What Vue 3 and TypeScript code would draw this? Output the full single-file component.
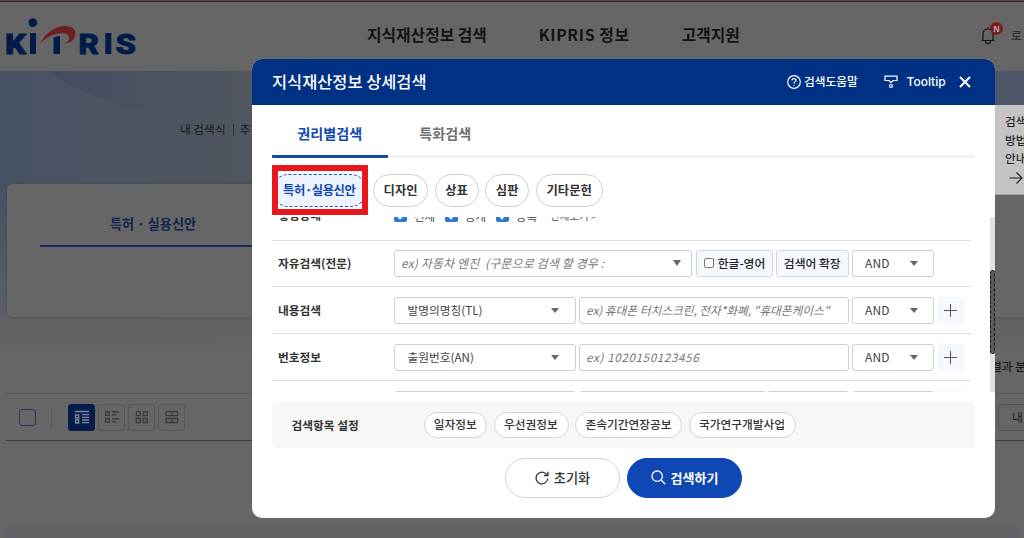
<script setup lang="ts">
interface FieldRow { label: string; option: string; placeholder: string }

const nav: string[] = ['지식재산정보 검색', 'KIPRIS 정보', '고객지원']
const chips = [
  { label: '디자인', width: 55.5 },
  { label: '상표', width: 44 },
  { label: '심판', width: 44.5 },
  { label: '기타문헌', width: 67 },
]
const rows: FieldRow[] = [
  { label: '내용검색', option: '발명의명칭(TL)', placeholder: 'ex) 휴대폰 터치스크린, 전자*화폐, "휴대폰케이스"' },
  { label: '번호정보', option: '출원번호(AN)', placeholder: 'ex) 1020150123456' },
]
const states: string[] = ['전체', '공개', '등록']
const extras = [
  { label: '일자정보', width: 63.5 },
  { label: '우선권정보', width: 75 },
  { label: '존속기간연장공보', width: 107 },
  { label: '국가연구개발사업', width: 107 },
]
</script>

<template>
  <div class="screen">
    <div class="page">
      <header class="top">
        <svg class="logo" width="132" height="40" viewBox="0 0 132 40" role="img" aria-label="KIPRIS">
          <g class="logo-letters">
            <text x="0" y="37" textLength="21" lengthAdjust="spacingAndGlyphs">K</text>
            <text x="73.500" y="37" textLength="20.500" lengthAdjust="spacingAndGlyphs">R</text>
            <text x="110.500" y="37" textLength="20.500" lengthAdjust="spacingAndGlyphs">S</text>
          </g>
          <g class="logo-blue">
            <circle cx="27.800" cy="5.600" r="4.300" />
            <rect x="25" y="16" width="6" height="21" />
            <path d="M48.500 20.500q3-1.400 6.500-1.500v18h-6.500z" />
            <rect x="100.300" y="16" width="6" height="21" />
          </g>
          <path class="logo-red" d="M35 27C40 16 50 9 60 9c7 0 12 4 10 10-1 4.500-5 7-11 7.700 3.500-1.500 5.500-3.500 5.200-6C63.500 13.500 46 14.500 35 27z" />
        </svg>
        <nav class="nav">
          <span v-for="item in nav" :key="item">{{ item }}</span>
        </nav>
        <div class="user">
          <svg width="16" height="20" viewBox="0 0 16 20" class="bell">
            <path d="M1.500 14.500h13M3 14.200V8.500c0-3.300 2-5.500 5-5.500s5 2.200 5 5.500v5.700M8 3V1.200M5.500 15c0 3.600 5 3.600 5 0" />
          </svg>
          <span class="badge">N</span>
          <span class="login">로</span>
        </div>
      </header>

      <section class="hero">
        <svg class="wave" width="256" height="290" viewBox="0 0 256 290">
          <defs>
            <linearGradient id="arc" x1="0" x2="1" y1="0" y2="0">
              <stop offset="0" stop-color="#424d60" />
              <stop offset="1" stop-color="#51565f" stop-opacity="0.200" />
            </linearGradient>
          </defs>
          <path d="M46 0C90 28 140 49 256 50V0z" fill="url(#arc)" />
        </svg>
        <div class="hero-links"><span>내 검색식</span><i></i><span>추</span></div>
        <div class="card"><div class="card-tab">특허 · 실용신안</div></div>
      </section>

      <div class="result-head">결과 분</div>
      <div class="toolbar">
        <span class="box"></span>
        <i class="split"></i>
        <span class="view on">
          <svg width="16" height="16" viewBox="0 0 16 16"><path d="M1 2.500h14M1.500 6h3.200v3H1.500zM1.500 11h3.200v3H1.500zM8 5.600h7M8 8.400h7M8 11h7M8 13.700h7" /></svg>
        </span>
        <span class="view">
          <svg width="16" height="16" viewBox="0 0 16 16"><path d="M1.700 2.700h3.600v3.600H1.700zM1.700 9.500h3.600v3.600H1.700zM8 3h7M8 5.900h4.500M8 10h7M8 12.900h4.500" /></svg>
        </span>
        <span class="view">
          <svg width="16" height="16" viewBox="0 0 16 16"><path d="M2.300 2.700h4v4h-4zM9.300 2.700h4v4h-4zM2.300 9.500h4v4h-4zM9.300 9.500h4v4h-4z" /></svg>
        </span>
        <span class="view">
          <svg width="16" height="16" viewBox="0 0 16 16"><path d="M2 2.700h11.600v4H2zM2 9.500h11.600v4H2zM7.800 2.700v4M7.800 9.500v4" /></svg>
        </span>
        <span class="mine">내</span>
      </div>
      <div class="result-strip"></div>

      <aside class="guide">
        <span>검색</span><span>방법</span><span>안내</span>
        <svg width="14" height="14" viewBox="0 0 14 14"><path d="M.5 7h12.500M7.500 1.500L13 7l-5.500 5.500" /></svg>
      </aside>
    </div>

    <div class="modal">
      <header class="modal-head">
        <h1>지식재산정보 상세검색</h1>
        <svg class="help" width="14" height="14" viewBox="0 0 14 14">
          <circle cx="7" cy="7" r="6.300" />
          <path d="M5 5.600C5 3 9 3 9 5.400 9 6.900 7 6.800 7 8.400M7 9.700v1" />
        </svg>
        <span class="help-text">검색도움말</span>
        <svg class="tip" width="14" height="14" viewBox="0 0 14 14">
          <path d="M1 1.200h12v4.300H9L7 7.700 5 5.500H1z" /><circle cx="7" cy="11" r="1.500" />
        </svg>
        <span class="tip-text">Tooltip</span>
        <svg class="close" width="12" height="12" viewBox="0 0 12 12"><path d="M1 1l10 10M11 1L1 11" /></svg>
      </header>

      <div class="tabs"><span class="tab active">권리별검색</span><span class="tab">특화검색</span></div>

      <div class="chips">
        <span class="chip selected">특허·실용신안</span>
        <span v-for="c in chips" :key="c.label" class="chip" :style="{ width: c.width + 'px' }">{{ c.label }}</span>
        <div class="marker"></div>
      </div>

      <div class="scroll">
        <div class="row first">
          <span class="label">행정상태</span>
          <span v-for="s in states" :key="s" class="state">
            <svg width="13" height="13" viewBox="0 0 13 13"><rect width="13" height="13" rx="2" /><path d="M3.200 6.500l2.800 3 4.200-4.800" /></svg>{{ s }}
          </span>
          <span class="more">전체보기 &gt;</span>
        </div>
        <div class="row">
          <span class="label">자유검색(전문)</span>
          <div class="field free"><em>ex) 자동차 엔진&nbsp; (구문으로 검색 할 경우 :</em><b class="arrow tall"></b></div>
          <span class="btn check"><i></i>한글-영어</span>
          <span class="btn expand">검색어 확장</span>
          <div class="field op"><span>AND</span><b class="arrow"></b></div>
        </div>
        <div v-for="r in rows" :key="r.label" class="row">
          <span class="label">{{ r.label }}</span>
          <div class="field kind"><span>{{ r.option }}</span><b class="arrow"></b></div>
          <div class="field query"><em :class="{ digits: r.label === '번호정보' }">{{ r.placeholder }}</em></div>
          <div class="field op"><span>AND</span><b class="arrow"></b></div>
          <span class="plus"></span>
        </div>
        <div class="row last">
          <span class="label"></span>
          <div class="field kind"></div>
          <div class="field date"></div>
          <div class="field half"></div>
          <div class="field op"></div>
          <span class="plus"></span>
        </div>
        <div class="track"><div class="thumb"></div></div>
      </div>

      <div class="settings">
        <span class="settings-label">검색항목 설정</span>
        <span v-for="e in extras" :key="e.label" class="pill" :style="{ width: e.width + 'px' }">{{ e.label }}</span>
      </div>

      <div class="actions">
        <span class="action">
          <svg width="14" height="14" viewBox="0 0 14 14"><path d="M12.700 7.500A5.800 5.800 0 1 1 10.800 2.700L12.800 4.500M12.900.8v3.900H9" /></svg>초기화
        </span>
        <span class="action primary">
          <svg width="15" height="15" viewBox="0 0 15 15"><circle cx="6.200" cy="6.200" r="5.200" /><path d="M10 10l4.300 4.300" /></svg>검색하기
        </span>
      </div>
    </div>
  </div>
</template>

<style>
html, body { margin: 0; overflow: hidden; }
</style>

<style scoped>
* { box-sizing: border-box; }
.screen { position: relative; width: 1024px; height: 538px; overflow: hidden; font-family: "Noto Sans CJK KR", sans-serif; white-space: nowrap; font-size: 11.7px; color: #333; background: #666; }
svg { display: block; flex: none; fill: none; }
i, b, em { font-weight: inherit; }
.page { position: relative; z-index: 0; width: 1024px; height: 538px; overflow: hidden; }
.top { height: 71px; border-top: 1px solid #643d42; box-shadow: inset 0 1px #2c2526; display: flex; position: relative; }
.logo { margin: 16px 0 0 5px; overflow: visible; }
.logo-letters { font: 900 28.500px Roboto, sans-serif; fill: #001b48; stroke: #001b48; stroke-width: .8; }
.logo-blue { fill: #001b48; }
.logo-red { fill: #701f20; }
.nav { display: flex; position: absolute; left: 367px; top: 22px; gap: 52px; font-size: 15.8px; font-weight: 700; line-height: 24px; color: #141414; }
.nav span:nth-child(2) { letter-spacing: .64px; }
.user { position: absolute; left: 980px; top: 20px; }
.bell { margin-top: 5px; stroke: #151515; stroke-width: 1.2; }
.badge { position: absolute; left: 10px; top: 1px; width: 13px; height: 13px; border-radius: 50%; background: #7c1f22; color: #aaa; font: 700 8px/13px "Noto Sans"; text-align: center; }
.login { position: absolute; left: 31px; top: 5px; line-height: 18px; color: #222; }
.hero { height: 289px; position: relative; background: linear-gradient(90deg, #475262 0, #51565f 25%, #596069 60%, #4c5666 100%); }
.hero::after { content: ""; position: absolute; inset: 0; background: linear-gradient(180deg, #6660 45%, #666 100%); }
.wave { position: absolute; left: 0; top: 0; z-index: 1; }
.hero-links { position: absolute; z-index: 1; left: 180px; top: 49px; display: flex; align-items: center; line-height: 18px; color: #1a1a1a; }
.hero-links i { width: 1px; height: 12px; margin: 2px 6px 0 7px; background: #333; }
.card { position: absolute; z-index: 2; left: 7px; top: 113px; width: 1030px; height: 133px; border-radius: 5px; background: #666; box-shadow: 0 0 3px #444a; padding: 0 33px; }
.card-tab { width: 228px; height: 63px; border-bottom: 2px solid #142c5e; text-align: center; font-weight: 700; font-size: 13.100px; line-height: 80px; color: #10254f; padding-right: 2px; }
.result-head { height: 33px; padding-left: 991px; line-height: 11px; color: #1d1d1d; font-weight: 500; }
.toolbar { height: 48px; margin-left: 6px; border-top: 1px solid #5a5a5a; border-bottom: 1px solid #404040; display: flex; align-items: center; position: relative; }
.box { width: 17px; height: 17px; margin-left: 13px; border: 1px solid #27395d; border-radius: 3px; }
.split { width: 1px; height: 23px; margin: 0 16px 0 15px; background: #5a5a5a; }
.view { width: 27px; height: 27px; margin-right: 3px; border: 1px solid #575757; border-radius: 3px; display: flex; align-items: center; justify-content: center; }
.view svg { stroke: #3b3b3b; stroke-width: 1.3; }
.view.on { background: #061d4b; border-color: #061d4b; }
.view.on svg { stroke: #80899b; }
.mine { position: absolute; left: 992px; top: 10px; width: 80px; height: 27px; border: 1px solid #555; border-radius: 3px; padding-left: 13px; line-height: 23px; color: #1b1b1b; }
.result-strip { height: 20px; margin: 84px 6px 0; border-radius: 5px; background: #616366; }
.guide { position: absolute; z-index: 3; left: 994px; top: 105px; width: 50px; height: 90px; background: #c4c4c4; padding: 7px 0 0 11px; display: flex; flex-direction: column; line-height: 18.700px; font-weight: 500; color: #2c2c2c; border-bottom: 1px solid #a0a0a0; }
.guide svg { margin: 3px 0 0 4px; stroke: #222; stroke-width: 1.2; }

.modal { position: absolute; z-index: 1; left: 252px; top: 59px; width: 743px; height: 458.500px; border-radius: 10px; background: #fff; overflow: hidden; }
.modal-head { height: 46px; background: #003184; color: #fff; display: flex; align-items: center; padding-left: 20px; }
h1 { margin: -2px 0 0; width: 515px; font-size: 16.400px; font-weight: 500; }
.modal-head svg { stroke: #fff; stroke-width: 1.2; }
.help-text { width: 54px; margin: -3px 0 0 3px; font-weight: 500; }
.tip { margin-left: 25.500px; }
.tip-text { width: 39px; margin: -1px 0 0 9px; font: 500 12px Inter, "Noto Sans", sans-serif; }
.modal-head .close { margin-left: 13px; stroke-width: 2; }
.tabs { height: 53px; margin: 0 20px; border-bottom: 3px solid #f2f2f2; display: flex; font-size: 14.100px; font-weight: 700; text-align: center; line-height: 56px; color: #707070; }
.tab { width: 115.500px; height: 53px; }
.tab.active { color: #1149b3; border-bottom: 3px solid #1149b3; border-radius: 1px; }
.chips { position: relative; display: flex; gap: 6.300px; height: 33px; margin: 15.500px 20px 0; }
.chip { height: 33px; border: 1px solid #cfcfcf; border-radius: 17px; font-size: 12.300px; font-weight: 700; line-height: 30px; text-align: center; flex: none; }
.chip.selected { width: 94.500px; border: 1.500px dashed #2456b4; color: #1149b3; background: #edf4ff; letter-spacing: -.4px; }
.marker { position: absolute; left: 0; top: -8.500px; width: 96px; height: 50px; border: 6px solid #e8171d; }
.scroll { position: relative; height: 175.500px; margin: 10px 0 0 20px; overflow: hidden; }
.row { height: 46.900px; width: 698.500px; padding-left: 6px; border-bottom: 1px solid #ddd; display: flex; align-items: center; }
.first { margin-top: -22.800px; }
.label { width: 116px; font-weight: 700; flex: none; padding-bottom: 2px; }
.first > * { transform: translateY(-1px); }
.state { width: 51px; display: flex; align-items: center; gap: 7px; color: #444; font-size: 11.500px; }
.state rect { fill: #2e79d0; }
.state path { stroke: #fff; stroke-width: 1.600; }
.more { margin-left: 3px; font-size: 10.500px; color: #555; }
.field { height: 26.500px; border: 1px solid #cfcfcf; border-radius: 3px; display: flex; align-items: center; color: #444; flex: none; }
.field span { padding-bottom: 2px; }
.field em { color: #777; margin-left: 6px; padding-bottom: 2px; font-style: italic; }
.field em.digits { letter-spacing: .6px; }
.free { width: 298px; margin-right: 4px; font-size: 12px; }
.free em { letter-spacing: .12px; }
.kind { width: 181.500px; margin-right: 3.500px; padding-left: 12.500px; }
.query { width: 269.500px; margin-right: 3px; }
.op { width: 82.500px; padding-left: 12.500px; font-size: 12px; letter-spacing: .2px; }
.arrow { width: 0; height: 0; margin-left: auto; margin-right: 15.500px; border: 4px solid transparent; border-top: 5px solid #666; border-bottom: 0; }
.arrow.tall { border-width: 6px 4px 0; margin-right: 10px; margin-top: -1px; }
.btn { height: 26.500px; border: 1px solid #d3d8e0; border-radius: 3px; background: #f5f8fe; font-weight: 500; font-size: 11.800px; color: #222; display: flex; align-items: center; justify-content: center; padding-bottom: 3px; }
.check { width: 77px; margin-right: 3px; }
.check i { width: 10px; height: 10px; border: 1px solid #777; border-radius: 2px; margin: 2px 4px 0 0; background: #fff; }
.expand { width: 72.500px; margin-right: 3px; }
.plus { width: 26.500px; height: 26.500px; margin-left: 3.500px; border-radius: 3px; background: linear-gradient(#555, #555) center / 13px 1.300px no-repeat, linear-gradient(#555, #555) center / 1.300px 13px no-repeat, #f5f8fe; }
.date { width: 188px; margin-right: 0; }
.half { width: 82px; margin-right: 3px; }
.track { position: absolute; left: 718px; top: 0; width: 5px; height: 175.500px; background: #e1e1e1; border-radius: 2px 0 0 2px; overflow: hidden; }
.thumb { height: 84px; margin-top: 53.500px; background: #5b5b5b; border: 1.500px dashed #111; border-radius: 3px; }
.settings { height: 46px; margin: 10px 20px 0; border-radius: 6px; background: #f7f7f7; display: flex; align-items: center; gap: 6.500px; padding-left: 19.500px; }
.settings-label { width: 125.500px; font-weight: 700; padding-bottom: 2px; }
.pill { height: 26.500px; border: 1px solid #d5d5d5; border-radius: 14px; background: #fff; text-align: center; line-height: 22.500px; font-weight: 500; flex: none; }
.actions { display: flex; justify-content: center; gap: 6.500px; margin-top: 10px; }
.action { width: 115.500px; height: 39.500px; border: 1px solid #d3d3d3; border-radius: 20px; display: flex; align-items: center; justify-content: center; gap: 5px; font-size: 13.200px; line-height: 36px; font-weight: 500; }
.action svg { stroke: #333; stroke-width: 1.300; }
.action.primary { background: #0f48b4; border-color: #0f48b4; color: #fff; font-weight: 700; font-size: 13px; }
.action.primary svg { stroke: #fff; }
</style>
